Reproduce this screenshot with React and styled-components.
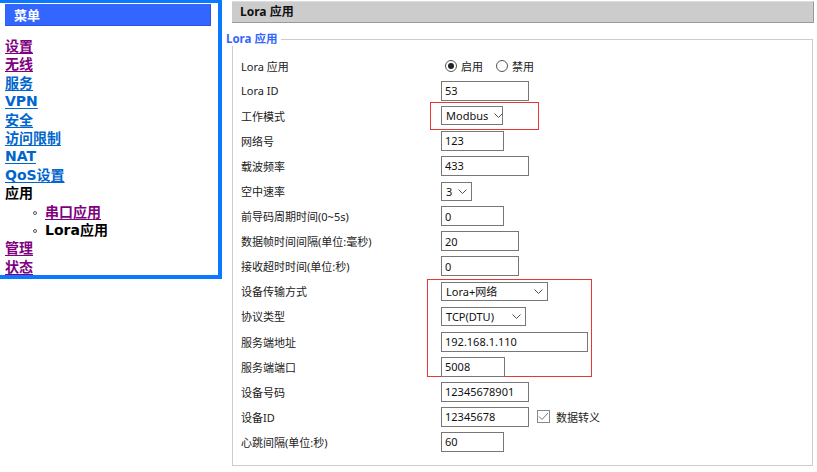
import React from "react";
import styled, { createGlobalStyle } from "styled-components";

const GlobalStyle = createGlobalStyle`
    html, body {
        margin: 0;
        padding: 0;
        background: #fff;
    }
    body {
        font-family: "Noto Sans", "Noto Sans CJK SC", sans-serif;
        font-size: 11px;
        color: #222;
    }
`;

const Page = styled.div`
    display: flex;
    align-items: flex-start;
    width: 817px;
    height: 472px;
    overflow: hidden;
`;

const Sidebar = styled.div`
    box-sizing: border-box;
    width: 222px;
    height: 279px;
    border: 4px solid #0a78ff;
    border-top-width: 3px;
    border-left: none;
    flex-shrink: 0;
`;

const MenuHeader = styled.div`
    box-sizing: border-box;
    margin: 1px 7px 0 5px;
    height: 22px;
    padding-left: 9px;
    background: #3366ff;
    border-bottom: 1px solid #2a55e0;
    border-right: 1px solid #2a55e0;
    color: #fff;
    font-family: "Noto Sans CJK SC", sans-serif;
    font-weight: bold;
    font-size: 13px;
    line-height: 21px;
`;

const MenuList = styled.ul`
    list-style: none;
    margin: 11px 0 0;
    padding: 0 0 0 5px;
    font-family: "DejaVu Sans", "Noto Sans CJK SC", sans-serif;
    font-weight: bold;
    font-size: 14px;
    line-height: 18.4px;
`;

const SubList = styled.ul`
    list-style: none;
    margin: 0;
    padding: 0 0 0 28px;
`;

const SubItem = styled.li`
    position: relative;
    padding-left: 12px;
    &::before {
        content: "";
        position: absolute;
        left: 0;
        top: 8px;
        width: 2px;
        height: 2px;
        border: 1px solid #555;
        border-radius: 50%;
    }
`;

const MenuLink = styled.a`
    color: ${(p) => (p.visited ? "#800080" : "#0066cc")};
    text-decoration: underline;
    text-underline-offset: 2px;
`;

const MenuText = styled.span`
    color: #000;
`;

const Main = styled.div`
    margin-left: 10px;
    width: 582px;
    flex-shrink: 0;
`;

const TitleBar = styled.div`
    box-sizing: border-box;
    margin-top: 1px;
    height: 22px;
    padding-left: 8px;
    background: #cccccc;
    border-top: 1px solid #dcdcdc;
    border-bottom: 1px solid #999;
    border-right: 1px solid #999;
    font-weight: bold;
    font-size: 12px;
    line-height: 20px;
    color: #111;
`;

const Fieldset = styled.fieldset`
    box-sizing: border-box;
    margin: 9px 0 0;
    width: 581px;
    height: 434px;
    padding: 7px 0 0 8px;
    border: 1px solid #cccccc;
    min-inline-size: 0;
`;

const Legend = styled.legend`
    margin-left: -15px;
    padding: 0 4px 0 0;
    color: #3366ff;
    font-weight: bold;
    font-size: 11.5px;
    line-height: 14px;
`;

const Row = styled.div`
    display: grid;
    grid-template-columns: 200px 1fr;
    align-items: center;
    height: 25.1px;
`;

const Label = styled.div`
    color: #222;
    font-size: 11px;
    white-space: nowrap;
`;

const Value = styled.div`
    position: relative;
    display: flex;
    align-items: center;
    gap: 8px;
    height: 100%;
`;

const Input = styled.input`
    box-sizing: border-box;
    width: ${(p) => p.w}px;
    height: 20px;
    margin: 0;
    padding: 0 3px;
    border: 1px solid #777;
    font-family: "Noto Sans", "Noto Sans CJK SC", sans-serif;
    font-size: 11px;
    color: #111;
    background: #fff;
    outline: none;
`;

const SelectBox = styled.div`
    box-sizing: border-box;
    display: flex;
    align-items: center;
    justify-content: space-between;
    gap: 6px;
    width: ${(p) => p.w}px;
    height: 19px;
    padding: 0 4px 0 4px;
    border: 1px solid #777;
    background: #fff;
    color: #111;
    font-size: 11px;
    white-space: nowrap;
`;

const Highlight = styled.div`
    position: absolute;
    left: ${(p) => p.l}px;
    top: ${(p) => p.t}px;
    width: ${(p) => p.w}px;
    height: ${(p) => p.h}px;
    border: 1px solid #e83535;
    box-sizing: border-box;
    pointer-events: none;
`;

const RadioGroup = styled.div`
    display: flex;
    align-items: center;
    padding-left: 4px;
`;

const Radio = styled.span`
    box-sizing: border-box;
    width: 12px;
    height: 12px;
    border: 1px solid #555;
    border-radius: 50%;
    display: inline-flex;
    align-items: center;
    justify-content: center;
    margin-right: 4px;
    &::after {
        content: "";
        width: 6px;
        height: 6px;
        border-radius: 50%;
        background: ${(p) => (p.checked ? "#222" : "transparent")};
    }
`;

const RadioText = styled.span`
    margin-right: 13px;
`;

const CheckWrap = styled.label`
    display: flex;
    align-items: center;
    gap: 6px;
`;

const CheckBox = styled.span`
    box-sizing: border-box;
    width: 13px;
    height: 13px;
    border: 1px solid #888;
    display: inline-flex;
    align-items: center;
    justify-content: center;
    background: #fff;
`;

const Chevron = () => (
    <svg width="9" height="5" viewBox="0 0 9 5" style={{ flexShrink: 0 }}>
        <path d="M0.5 0.5 L4.5 4.5 L8.5 0.5" fill="none" stroke="#555" strokeWidth="1" />
    </svg>
);

const Select = ({ w, children }) => (
    <SelectBox w={w}>
        <span>{children}</span>
        <Chevron />
    </SelectBox>
);

const menu = [
    { t: "设置", v: true },
    { t: "无线", v: true },
    { t: "服务" },
    { t: "VPN" },
    { t: "安全" },
    { t: "访问限制" },
    { t: "NAT" },
    { t: "QoS设置" },
];

export default function App() {
    return (
        <>
            <GlobalStyle />
            <Page>
                <Sidebar>
                    <MenuHeader>菜单</MenuHeader>
                    <MenuList>
                        {menu.map((m) => (
                            <li key={m.t}>
                                <MenuLink href="#" visited={m.v ? 1 : 0}>
                                    {m.t}
                                </MenuLink>
                            </li>
                        ))}
                        <li>
                            <MenuText>应用</MenuText>
                            <SubList>
                                <SubItem>
                                    <MenuLink href="#" visited={1}>
                                        串口应用
                                    </MenuLink>
                                </SubItem>
                                <SubItem>
                                    <MenuText>Lora应用</MenuText>
                                </SubItem>
                            </SubList>
                        </li>
                        <li>
                            <MenuLink href="#" visited={1}>
                                管理
                            </MenuLink>
                        </li>
                        <li>
                            <MenuLink href="#" visited={1}>
                                状态
                            </MenuLink>
                        </li>
                    </MenuList>
                </Sidebar>

                <Main>
                    <TitleBar>Lora 应用</TitleBar>
                    <Fieldset>
                        <Legend>Lora 应用</Legend>
                        <Row>
                            <Label>Lora 应用</Label>
                            <Value>
                                <RadioGroup>
                                    <Radio checked />
                                    <RadioText>启用</RadioText>
                                    <Radio />
                                    <RadioText>禁用</RadioText>
                                </RadioGroup>
                            </Value>
                        </Row>
                        <Row>
                            <Label>Lora ID</Label>
                            <Value>
                                <Input w={88} readOnly value="53" />
                            </Value>
                        </Row>
                        <Row>
                            <Label>工作模式</Label>
                            <Value>
                                <Select w={62}>Modbus</Select>
                                <Highlight l={-11} t={-1} w={109} h={28} />
                            </Value>
                        </Row>
                        <Row>
                            <Label>网络号</Label>
                            <Value>
                                <Input w={63} readOnly value="123" />
                            </Value>
                        </Row>
                        <Row>
                            <Label>载波频率</Label>
                            <Value>
                                <Input w={88} readOnly value="433" />
                            </Value>
                        </Row>
                        <Row>
                            <Label>空中速率</Label>
                            <Value>
                                <Select w={31}>3</Select>
                            </Value>
                        </Row>
                        <Row>
                            <Label>前导码周期时间(0~5s)</Label>
                            <Value>
                                <Input w={63} readOnly value="0" />
                            </Value>
                        </Row>
                        <Row>
                            <Label>数据帧时间间隔(单位:毫秒)</Label>
                            <Value>
                                <Input w={78} readOnly value="20" />
                            </Value>
                        </Row>
                        <Row>
                            <Label>接收超时时间(单位:秒)</Label>
                            <Value>
                                <Input w={78} readOnly value="0" />
                            </Value>
                        </Row>
                        <Row>
                            <Label>设备传输方式</Label>
                            <Value>
                                <Select w={107}>Lora+网络</Select>
                                <Highlight l={-14} t={0} w={165} h={98} />
                            </Value>
                        </Row>
                        <Row>
                            <Label>协议类型</Label>
                            <Value>
                                <Select w={85}>TCP(DTU)</Select>
                            </Value>
                        </Row>
                        <Row>
                            <Label>服务端地址</Label>
                            <Value>
                                <Input w={147} readOnly value="192.168.1.110" />
                            </Value>
                        </Row>
                        <Row>
                            <Label>服务端端口</Label>
                            <Value>
                                <Input w={64} readOnly value="5008" />
                            </Value>
                        </Row>
                        <Row>
                            <Label>设备号码</Label>
                            <Value>
                                <Input w={88} readOnly value="12345678901" />
                            </Value>
                        </Row>
                        <Row>
                            <Label>设备ID</Label>
                            <Value>
                                <Input w={88} readOnly value="12345678" />
                                <CheckWrap>
                                    <CheckBox>
                                        <svg width="11" height="9" viewBox="0 0 11 9">
                                            <path d="M1 4.5 L4 7.5 L10 1" fill="none" stroke="#777" strokeWidth="1" />
                                        </svg>
                                    </CheckBox>
                                    <span>数据转义</span>
                                </CheckWrap>
                            </Value>
                        </Row>
                        <Row>
                            <Label>心跳间隔(单位:秒)</Label>
                            <Value>
                                <Input w={63} readOnly value="60" />
                            </Value>
                        </Row>
                    </Fieldset>
                </Main>
            </Page>
        </>
    );
}
